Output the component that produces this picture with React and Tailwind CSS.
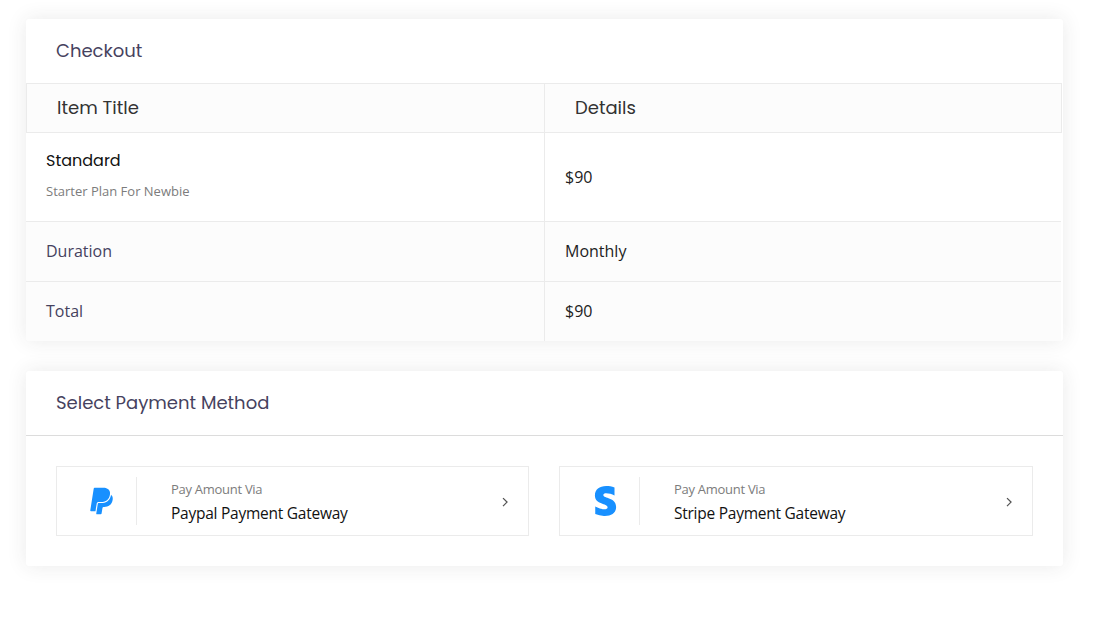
import React from "react";
import { FaPaypal, FaStripeS } from "react-icons/fa";

const HEAD = "font-['Poppins','Inter',sans-serif] whitespace-nowrap";
const CARD =
  "w-[1037px] overflow-hidden rounded-[3px] bg-white shadow-[0_0_20px_0_rgba(45,45,45,0.1)]";

function Row({ label, value, last }) {
  return (
    <div
      className={
        "mr-0.5 flex bg-[#fcfcfc] text-base leading-6 " +
        (last ? "h-[59px]" : "h-[60px] border-b border-[#ebebeb]")
      }
    >
      <div className="flex w-[519px] items-center border-r border-[#ebebeb] pb-0.5 pl-5 text-[#46425e]">
        <span>{label}</span>
      </div>
      <div className="flex flex-1 items-center pb-0.5 pl-5 text-[#222]">
        <span>{value}</span>
      </div>
    </div>
  );
}

function Gateway({ icon, name }) {
  return (
    <button className="flex h-[70px] items-center border border-[#ebebeb] text-left">
      <span className="flex h-12 w-20 shrink-0 items-center justify-end border-r border-[#ebebeb] pr-[23px] text-[#1890ff]">
        {icon}
      </span>
      <span className="flex flex-1 flex-col pt-0.5 pl-[34px]">
        <span className="text-[13px] leading-[22px] tracking-[-0.28px] text-[#7c7c7c]">Pay Amount Via</span>
        <span className="text-[15.5px] leading-[26px] tracking-[-0.25px] text-[#111]">{name}</span>
      </span>
      <svg className="mr-[19px] mt-px h-[10px] w-[8px] text-[#555]" viewBox="0 0 8 10" fill="none" stroke="currentColor" strokeWidth="1.3">
        <path d="M2 1.1L6 5.1L2 9.1" />
      </svg>
    </button>
  );
}

export default function App() {
  return (
    <main className="flex h-[621px] w-full flex-col gap-[30px] overflow-hidden bg-white pt-[19px] pl-[26px] font-['Open_Sans','Noto_Sans',sans-serif]">
      <section className={CARD}>
        <h2 className={HEAD + " flex h-16 items-center pb-0.5 pl-[30px] text-[18px] text-[#46425e]"}>Checkout</h2>
        <div className={HEAD + " mr-px flex h-[50px] border border-[#ebebeb] bg-[#fcfcfc] text-[18px] text-[#333]"}>
          <div className="flex w-[518px] items-center border-r border-[#ebebeb] pb-0.5 pl-[30px]">Item Title</div>
          <div className="flex items-center pb-0.5 pl-[30px]">Details</div>
        </div>
        <div className="mr-0.5 flex h-[89px] border-b border-[#ebebeb]">
          <div className="w-[519px] border-r border-[#ebebeb] pt-4 pl-5">
            <h3 className={HEAD + " text-base leading-6 text-[#111]"}>Standard</h3>
            <p className="mt-[7px] text-[13px] leading-[22px] text-[#7c7c7c]">Starter Plan For Newbie</p>
          </div>
          <div className="flex items-center pl-5 text-base text-[#222]">$90</div>
        </div>
        <Row label="Duration" value="Monthly" />
        <Row label="Total" value="$90" last />
      </section>

      <section className={CARD}>
        <h2 className={HEAD + " flex h-[65px] items-center border-b border-[#dcdcdc] pb-0.5 pl-[30px] text-[18px] text-[#46425e]"}>
          Select Payment Method
        </h2>
        <div className="grid grid-cols-[473px_474px] gap-[30px] p-[30px]">
          <Gateway icon={<FaPaypal className="h-[30px] w-[23px]" />} name="Paypal Payment Gateway" />
          <Gateway icon={<FaStripeS className="-mr-px h-[30px] w-[23px]" />} name="Stripe Payment Gateway" />
        </div>
      </section>
    </main>
  );
}
